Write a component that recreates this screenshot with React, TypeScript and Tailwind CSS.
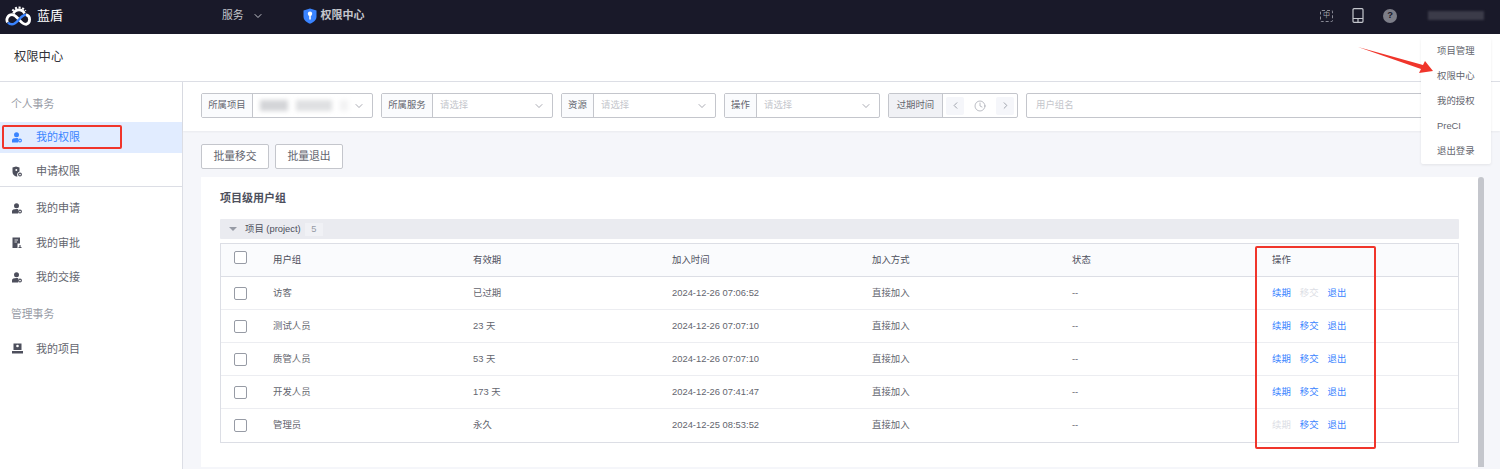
import { ChevronDown, ChevronLeft, ChevronRight, Clock } from 'lucide-react';

const rows = [
  { name: '访客', expire: '已过期', time: '2024-12-26 07:06:52', renew: true, transfer: false },
  { name: '测试人员', expire: '23 天', time: '2024-12-26 07:07:10', renew: true, transfer: true },
  { name: '质管人员', expire: '53 天', time: '2024-12-26 07:07:10', renew: true, transfer: true },
  { name: '开发人员', expire: '173 天', time: '2024-12-26 07:41:47', renew: true, transfer: true },
  { name: '管理员', expire: '永久', time: '2024-12-25 08:53:52', renew: false, transfer: true },
];

const menu = ['项目管理', '权限中心', '我的授权', 'PreCI', '退出登录'];

function Logo() {
  return (
    <svg width="28" height="22" viewBox="0 0 28 22" fill="none">
      <path d="M8.500 8.500A6 6 0 0 1 19.500 8.500" stroke="#fff" strokeWidth="2.600" />
      <path d="M7.500 6A7.800 7.800 0 0 1 20.500 6" stroke="#fff" strokeWidth="2" strokeDasharray="2 1.600" />
      <path d="M14 14.500C11.500 12 10 9.700 7 9.700A5.200 5.200 0 0 0 2.500 17.300" stroke="#fff" strokeWidth="2.800" />
      <path d="M14 14.500C16 17 18 19.300 21 19.300A5 5 0 0 0 21 9.700" stroke="#fff" strokeWidth="2.800" />
      <path d="M3 17.500A5 5 0 0 0 7 19.300C10 19.300 12 16.500 14 14.500C16 12 18 10 21 9.800" stroke="#3a84ff" strokeWidth="2.400" />
    </svg>
  );
}

function Shield() {
  return (
    <svg width="14" height="16" viewBox="0 0 14 16">
      <path d="M7 0.500 13.500 2.500V8.500C13.500 12 10.500 14.500 7 15.700 3.500 14.500 0.500 12 0.500 8.500V2.500Z" fill="#3a84ff" />
      <circle cx="7" cy="5.800" r="2.200" fill="#fff" />
      <rect x="6.200" y="6.500" width="1.600" height="5" fill="#fff" />
    </svg>
  );
}

function PersonIcon({ color }: { color: string }) {
  return (
    <svg width="10" height="11" viewBox="0 0 10 11">
      <circle cx="4.500" cy="2.800" r="2.500" fill={color} />
      <path d="M0 10.500V8.300C0 6.800 1.800 6 4.500 6 5.200 6 5.700 6.100 6.200 6.200V10.500Z" fill={color} />
      <circle cx="8" cy="8.500" r="1.400" fill="none" stroke={color} strokeWidth="1.100" />
    </svg>
  );
}

function KeyDocIcon({ color }: { color: string }) {
  return (
    <svg width="10" height="11" viewBox="0 0 10 11">
      <path d="M0.500 1.500 4 0.500 7.500 1.500V5.500A3.500 3.500 0 0 0 5.500 10.500H4C2 10 0.500 8 0.500 6Z" fill={color} />
      <circle cx="4.300" cy="4" r="1" fill="#fff" />
      <circle cx="8" cy="8.500" r="1.400" fill="none" stroke={color} strokeWidth="1.100" />
    </svg>
  );
}

function ApprovalIcon({ color }: { color: string }) {
  return (
    <svg width="10" height="12" viewBox="0 0 10 12">
      <path d="M0.500 0.500H8V6.500H5.500V11H0.500Z" fill={color} />
      <path d="M2.500 3H6M2.500 5H5" stroke="#fff" strokeWidth="0.800" />
      <path d="M6.500 10.500H9.500M8 8V10" stroke={color} strokeWidth="1.100" />
    </svg>
  );
}

function ProjectIcon({ color }: { color: string }) {
  return (
    <svg width="11" height="11" viewBox="0 0 11 11">
      <rect x="1.500" y="0.500" width="8" height="6.500" fill={color} />
      <circle cx="5.500" cy="3" r="1.300" fill="#fff" />
      <path d="M0 8H11V10.500H0Z" fill={color} />
    </svg>
  );
}

function SideItem({ icon, label, active }: { icon: React.ReactNode; label: string; active?: boolean }) {
  return (
    <div className={`flex h-[34.5px] items-center pl-[12px] text-[11px] ${active ? 'bg-[#e1ecff] text-[#3a84ff]' : 'text-[#63656e]'}`}>
      <span className="flex w-[24px] items-center">{icon}</span>
      {label}
    </div>
  );
}

function Filter({ label, labelW, w, placeholder, blurred }: { label: string; labelW: string; w: string; placeholder?: string; blurred?: boolean }) {
  return (
    <div className={`flex h-[25px] shrink-0 rounded-[2px] border border-[#c4c6cc] bg-white ${w}`}>
      <span className={`flex shrink-0 items-center justify-center border-r border-[#c4c6cc] bg-[#fafbfd] text-[9.4px] text-[#63656e] ${labelW}`}>{label}</span>
      <span className="flex min-w-0 flex-1 items-center justify-between px-[7px] text-[9.4px] text-[#c4c6cc]">
        {blurred ? (
          <span className="flex gap-[8px] blur-[2px]">
            <span className="h-[11px] w-[28px] bg-[#d4d5d8]" />
            <span className="h-[11px] w-[36px] bg-[#dfe0e2]" />
            <span className="h-[11px] w-[8px] bg-[#f2f2f3]" />
          </span>
        ) : (
          placeholder
        )}
        <ChevronDown size={12} strokeWidth={1.300} className="text-[#7b7d8a]" />
      </span>
    </div>
  );
}

function Checkbox() {
  return <span className="block h-[13px] w-[13px] rounded-[2px] border border-[#979ba5] bg-white" />;
}

const tableCols = 'grid h-[33px] grid-cols-[52px_200px_199px_200px_200px_200px_1fr] items-center';

export default function App() {
  return (
    <div className="relative flex h-[469px] w-[1500px] flex-col overflow-hidden bg-white font-['Liberation_Sans','Noto_Sans_CJK_SC',sans-serif] text-[#63656e]">
      {/* top nav */}
      <div className="flex h-[34px] shrink-0 items-center bg-[#191929] pb-[3px] text-[#c4c6cc]">
        <div className="ml-[5px] flex w-[217px] items-center gap-[4px] text-[13px] text-white">
          <Logo />
          蓝盾
        </div>
        <span className="text-[10.8px]">服务</span>
        <ChevronDown size={12} strokeWidth={2} className="ml-[8px]" />
        <span className="ml-[39px]"><Shield /></span>
        <span className="ml-[4px] text-[11px] font-bold">权限中心</span>
        <div className="ml-auto flex items-center">
          <span className="flex h-[12px] w-[13px] items-center justify-center rounded-[2px] border border-dashed border-[#8a8b96] text-[7px] text-[#a3a5af]">中</span>
          <svg className="ml-[19px]" width="12" height="15" viewBox="0 0 12 15" fill="none" stroke="#c4c6cc" strokeWidth="1.200">
            <rect x="1" y="0.700" width="10" height="13.600" rx="1" />
            <path d="M1 10.500H11M6 10.500V14.300" />
          </svg>
          <span className="ml-[19px] flex h-[14px] w-[14px] items-center justify-center rounded-full bg-[#7d7e88] text-[9.4px] font-bold text-[#191929]">?</span>
          <span className="ml-[31px] mr-[16px] h-[9px] w-[56px] bg-[#3b3b49] blur-[1px]" />
        </div>
      </div>

      {/* page title */}
      <div className="flex h-[48px] shrink-0 items-center border-b border-[#dcdee5] pl-[14px] text-[12.3px] text-[#313238]">权限中心</div>

      <div className="flex min-h-0 flex-1">
        {/* sidebar */}
        <aside className="w-[183px] shrink-0 border-r border-[#dcdee5] bg-white">
          <div className="flex h-[40px] items-center pl-[11px] pt-[4px] text-[10.8px] text-[#979ba5]">个人事务</div>
          <div className="h-[31px] overflow-hidden">
            <div className="-mt-[2px]"><SideItem active icon={<PersonIcon color="#3a84ff" />} label="我的权限" /></div>
          </div>
          <div className="h-[34px] border-b border-[#dcdee5] pt-[1px]">
            <SideItem icon={<KeyDocIcon color="#4d4f5c" />} label="申请权限" />
          </div>
          <div className="pt-[4px]">
            <SideItem icon={<PersonIcon color="#4d4f5c" />} label="我的申请" />
            <SideItem icon={<ApprovalIcon color="#4d4f5c" />} label="我的审批" />
            <SideItem icon={<PersonIcon color="#4d4f5c" />} label="我的交接" />
          </div>
          <div className="flex h-[37px] items-center pl-[11px] pt-[3px] text-[10.8px] text-[#979ba5]">管理事务</div>
          <SideItem icon={<ProjectIcon color="#4d4f5c" />} label="我的项目" />
        </aside>

        {/* main */}
        <main className="flex min-w-0 flex-1 flex-col bg-[#f5f6fa]">
          <div className="flex h-[49px] shrink-0 items-center gap-[8px] bg-white pb-[2px] pl-[18px] shadow-[0_1px_2px_rgba(0,0,0,0.05)]">
            <Filter label="所属项目" labelW="w-[51px]" w="w-[172px]" blurred />
            <Filter label="所属服务" labelW="w-[51px]" w="w-[172px]" placeholder="请选择" />
            <Filter label="资源" labelW="w-[32px]" w="w-[155px]" placeholder="请选择" />
            <Filter label="操作" labelW="w-[32px]" w="w-[156px]" placeholder="请选择" />
            <div className="flex h-[25px] w-[130px] shrink-0 rounded-[2px] border border-[#c4c6cc] bg-white">
              <span className="flex w-[54px] shrink-0 items-center justify-center border-r border-[#c4c6cc] bg-[#f0f1f5] text-[9.4px]">过期时间</span>
              <span className="flex flex-1 items-center justify-between px-[3px] text-[#979ba5]">
                <span className="flex h-[18px] w-[18px] items-center justify-center rounded-[2px] bg-[#f5f6fa]"><ChevronLeft size={11} /></span>
                <Clock size={12} strokeWidth={1.300} />
                <span className="flex h-[18px] w-[18px] items-center justify-center rounded-[2px] bg-[#f5f6fa]"><ChevronRight size={11} /></span>
              </span>
            </div>
            <div className="flex h-[25px] w-[460px] shrink-0 items-center rounded-[2px] border border-[#c4c6cc] bg-white pl-[9px] text-[9.4px] text-[#c4c6cc]">用户组名</div>
          </div>

          <div className="flex shrink-0 gap-[6px] pl-[18px] pt-[13px]">
            <button className="h-[25px] w-[68px] rounded-[2px] border border-[#c4c6cc] bg-white text-[10.8px]">批量移交</button>
            <button className="h-[25px] w-[68px] rounded-[2px] border border-[#c4c6cc] bg-white text-[10.8px]">批量退出</button>
          </div>

          <div className="mt-[8px] flex min-h-0 flex-1 pb-[2px] pl-[18px]">
            <section className="w-[1277px] bg-white px-[19px]">
              <h2 className="flex h-[42px] items-center text-[11px] font-bold text-[#4d4f5c]">项目级用户组</h2>
              <div className="flex h-[20px] items-center rounded-[1px] bg-[#eaebf0] pl-[9px] text-[9.4px]">
                <span className="h-0 w-0 border-x-[4px] border-t-[4px] border-x-transparent border-t-[#979ba5]" />
                <span className="ml-[8px] text-[#4d4f5c]">项目 (project)</span>
                <span className="ml-[4px] flex h-[13px] w-[18px] items-center justify-center bg-[#f0f1f5] text-[#979ba5]">5</span>
              </div>
              <div className="mt-[4px] border border-[#dcdee5] text-[9.4px]">
                <div className={`${tableCols} border-b border-[#dcdee5] bg-[#fafbfd] text-[#4d4f5c]`}>
                  <span className="pb-[6px] pl-[13px]"><Checkbox /></span>
                  <span>用户组</span>
                  <span>有效期</span>
                  <span>加入时间</span>
                  <span>加入方式</span>
                  <span>状态</span>
                  <span>操作</span>
                </div>
                {rows.map((r, i) => (
                  <div key={r.name} className={`${tableCols} ${i < rows.length - 1 ? 'border-b border-[#ecedf1]' : ''}`}>
                    <span className="pl-[13px]"><Checkbox /></span>
                    <span>{r.name}</span>
                    <span>{r.expire}</span>
                    <span>{r.time}</span>
                    <span>直接加入</span>
                    <span>--</span>
                    <span className="flex gap-[9px] text-[#3a84ff]">
                      <span className={r.renew ? '' : 'text-[#dcdee5]'}>续期</span>
                      <span className={r.transfer ? '' : 'text-[#dcdee5]'}>移交</span>
                      <span>退出</span>
                    </span>
                  </div>
                ))}
              </div>
            </section>
            <div className="h-full w-[6px] shrink-0 rounded-t-[3px] bg-[#c4c6cc]" />
          </div>
        </main>
      </div>

      {/* dropdown menu */}
      <div className="absolute left-[1421px] top-[38px] flex h-[126px] w-[70px] flex-col justify-center rounded-[2px] bg-white shadow-[0_1px_3px_rgba(0,0,0,0.08)]">
        {menu.map((m) => (
          <div key={m} className="flex h-[25.200px] items-center pl-[16px] text-[9.4px]">{m}</div>
        ))}
      </div>

      {/* red annotations */}
      <div className="absolute left-[2px] top-[125px] h-[24px] w-[120px] rounded-[2px] border-2 border-[#f0352b]" />
      <div className="absolute left-[1255px] top-[246px] h-[203px] w-[121px] rounded-[2px] border-2 border-[#f0352b]" />
      <svg className="absolute left-[1355px] top-[44px]" width="82" height="32" viewBox="1355 44 82 32">
        <polygon points="1358,47 1423,65 1425,61 1433,71 1419,73 1421,69" fill="#f0352b" />
      </svg>
    </div>
  );
}
